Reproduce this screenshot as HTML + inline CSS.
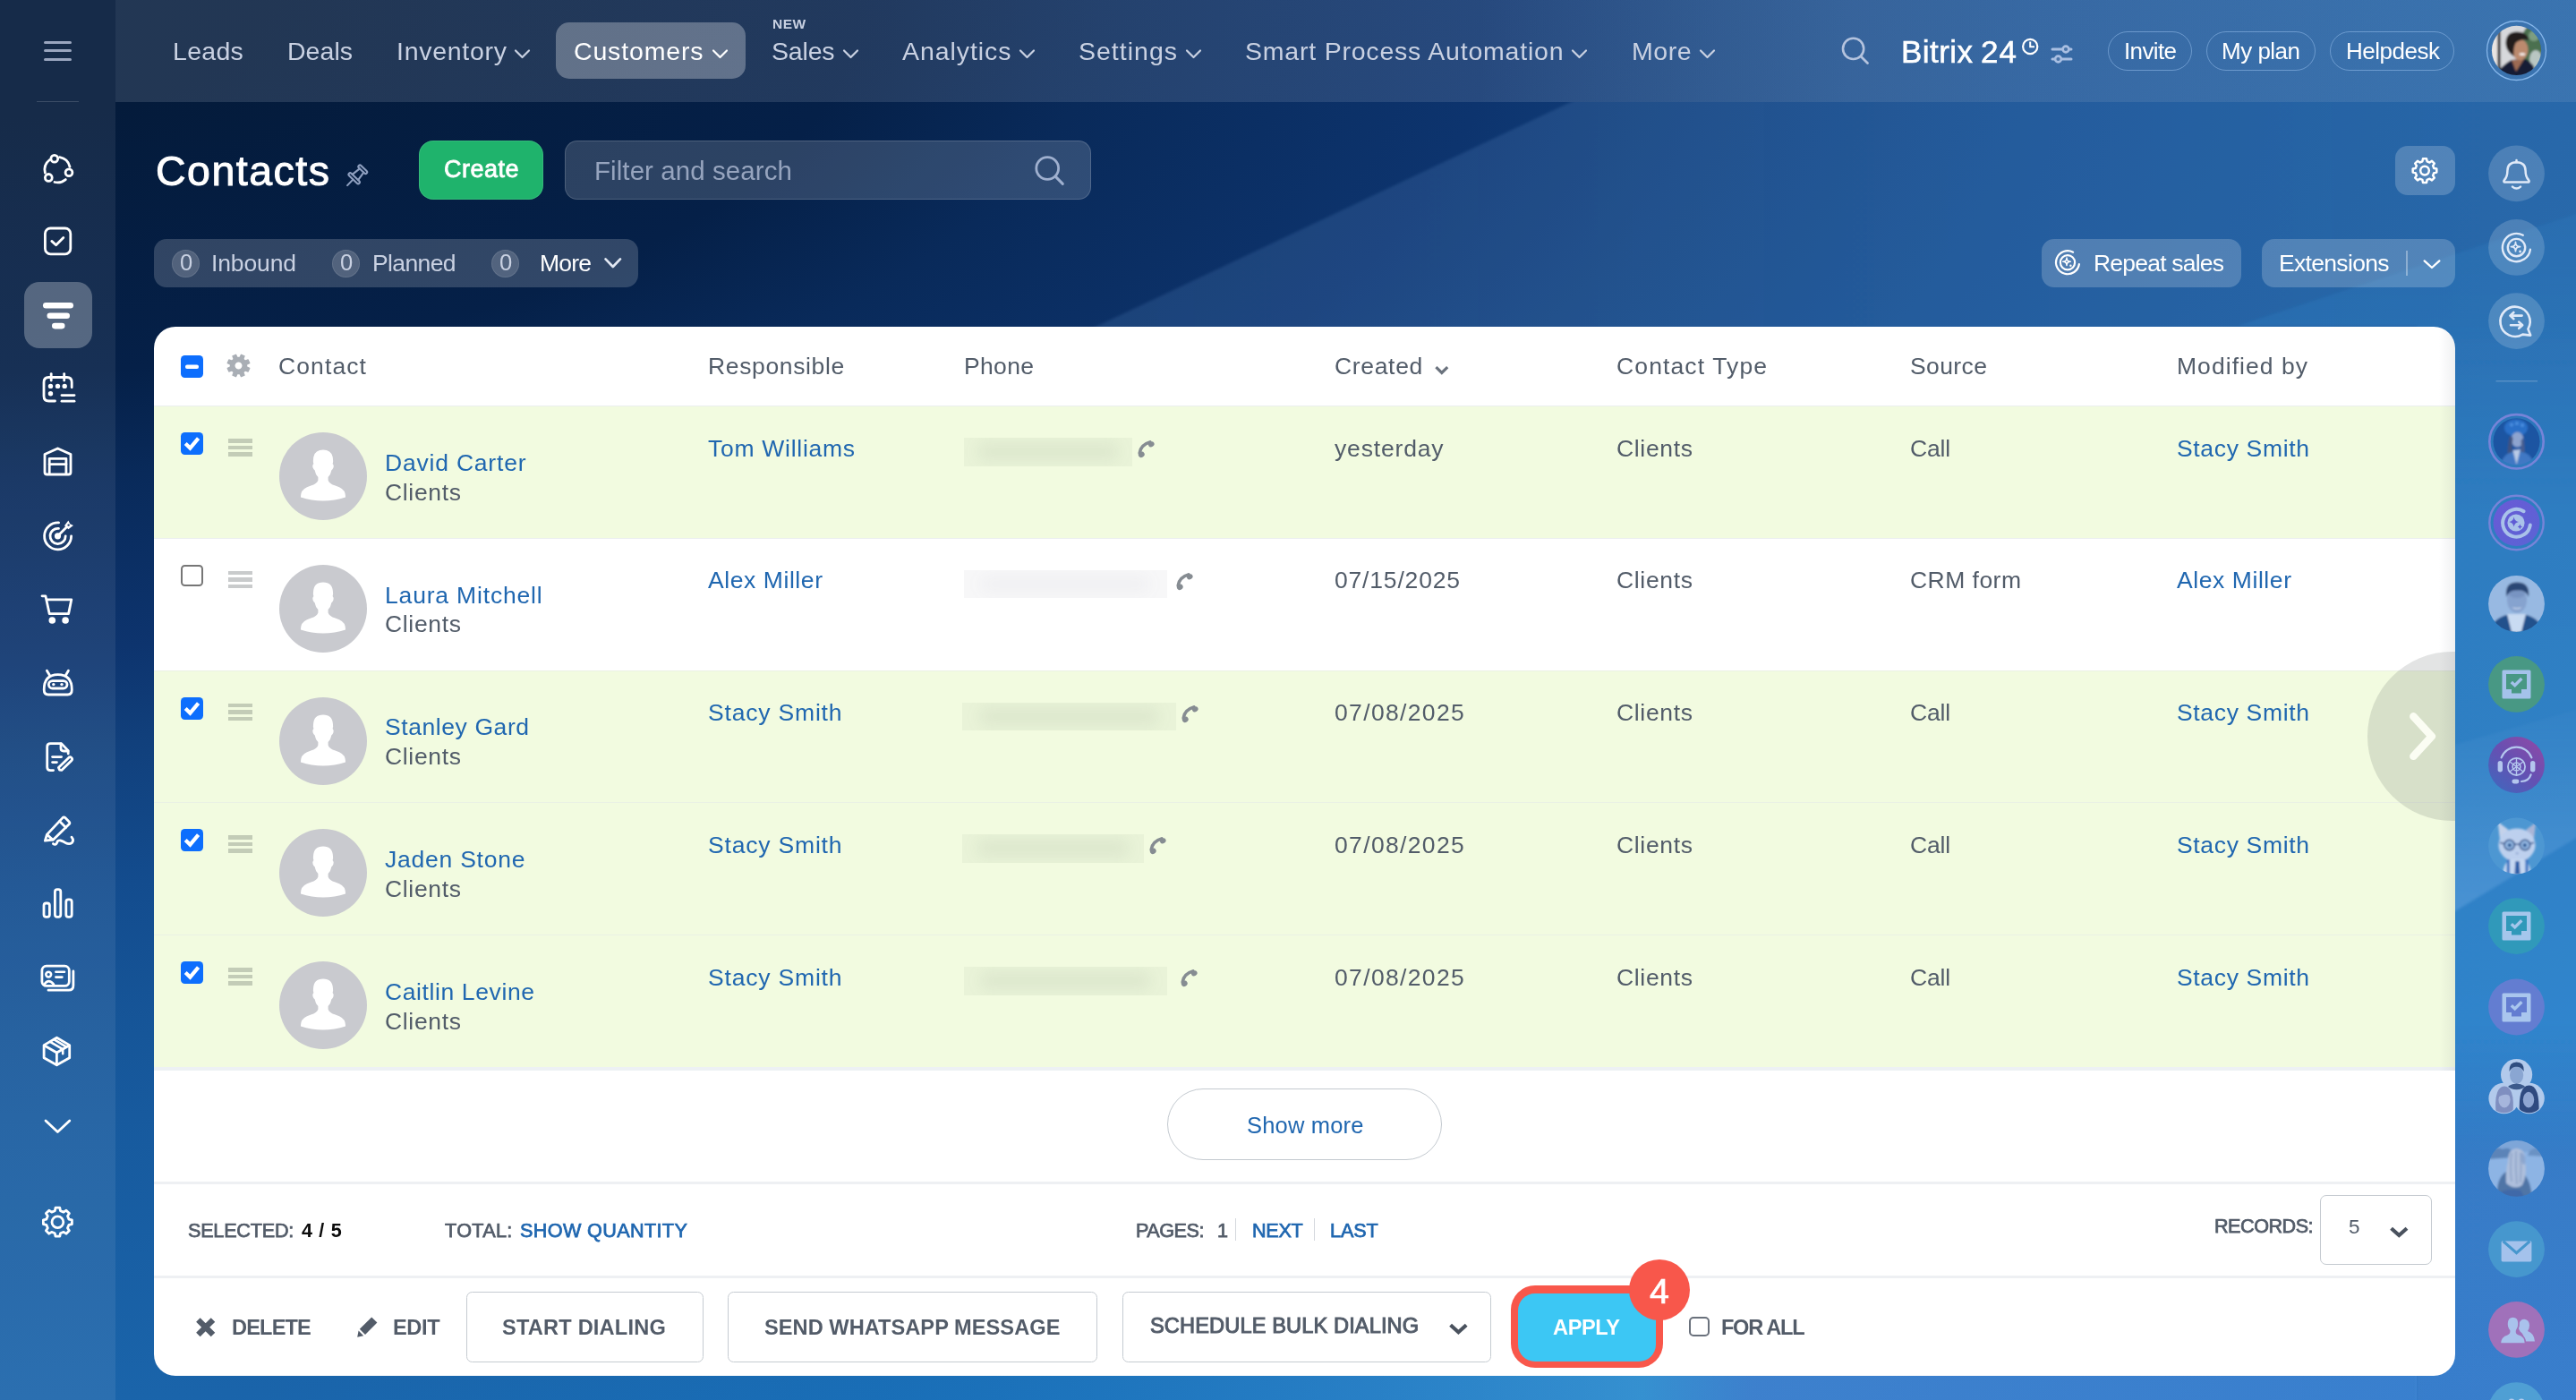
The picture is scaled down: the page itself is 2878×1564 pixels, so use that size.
<!DOCTYPE html>
<html lang="en"><head><meta charset="utf-8"><title>Contacts</title>
<style>
html,body{margin:0;padding:0}
body{width:2878px;height:1564px;overflow:hidden;position:relative;font-family:"Liberation Sans",sans-serif;
background:radial-gradient(ellipse 3000px 1300px at 0px 0px,rgb(4,27,59) 10%,rgb(5,32,72) 32%,rgb(9,42,90) 41%,rgb(13,52,110) 55.7%,rgb(17,64,124) 64%,rgb(19,76,142) 76%,rgb(22,86,153) 89%,rgb(23,90,158) 96%,rgb(26,100,170) 120%,rgb(26,106,180) 130%,rgb(30,112,190) 150%)}
.abs{position:absolute;display:block}
.t{position:absolute;display:block;white-space:pre;line-height:1;font-family:"Liberation Sans",sans-serif;will-change:transform}
svg{overflow:visible}
</style></head>
<body>
<svg class="abs" style="left:0;top:0" width="2878" height="1564" viewBox="0 0 2878 1564">
<defs>
<linearGradient id="wg1" gradientUnits="userSpaceOnUse" x1="1255" y1="0" x2="2878" y2="0"><stop offset="0" stop-color="rgb(120,170,230)" stop-opacity="0.15"/><stop offset="1" stop-color="rgb(120,170,230)" stop-opacity="0.17"/></linearGradient>
<linearGradient id="wg2" gradientUnits="userSpaceOnUse" x1="0" y1="239" x2="0" y2="1564"><stop offset="0" stop-color="rgb(60,180,255)" stop-opacity="0.07"/><stop offset="0.08" stop-color="rgb(60,180,255)" stop-opacity="0.10"/><stop offset="0.25" stop-color="rgb(60,180,255)" stop-opacity="0.24"/><stop offset="0.68" stop-color="rgb(60,180,255)" stop-opacity="0.25"/><stop offset="0.8" stop-color="rgb(60,180,255)" stop-opacity="0.05"/><stop offset="1" stop-color="rgb(60,180,255)" stop-opacity="0.05"/></linearGradient>
<linearGradient id="wg2b" gradientUnits="userSpaceOnUse" x1="0" y1="1150" x2="0" y2="1320"><stop offset="0" stop-color="rgb(120,130,230)" stop-opacity="0"/><stop offset="1" stop-color="rgb(120,130,230)" stop-opacity="0.12"/></linearGradient>
<linearGradient id="wg4" gradientUnits="userSpaceOnUse" x1="0" y1="800" x2="0" y2="1010"><stop offset="0" stop-color="rgb(170,210,255)" stop-opacity="0.03"/><stop offset="1" stop-color="rgb(170,210,255)" stop-opacity="0.20"/></linearGradient>
<linearGradient id="wg3" gradientUnits="userSpaceOnUse" x1="129" y1="0" x2="2743" y2="0">
<stop offset="0.06" stop-color="rgb(20,160,240)" stop-opacity="0"/>
<stop offset="0.327" stop-color="rgb(20,160,240)" stop-opacity="0.13"/>
<stop offset="0.53" stop-color="rgb(80,190,250)" stop-opacity="0.25"/>
<stop offset="0.653" stop-color="rgb(100,210,255)" stop-opacity="0.36"/>
<stop offset="0.70" stop-color="rgb(130,170,250)" stop-opacity="0.33"/>
<stop offset="1" stop-color="rgb(130,170,250)" stop-opacity="0.27"/></linearGradient>
</defs>
<clipPath id="cpw"><rect x="0" y="114" width="2878" height="1450"/></clipPath><filter id="fbw" x="-5%" y="-5%" width="110%" height="110%"><feGaussianBlur stdDeviation="1.6"/></filter>
<g clip-path="url(#cpw)"><polygon points="1150,400 1882,54 2960,54 2960,1650 2700,1650 2700,400" fill="url(#wg1)" filter="url(#fbw)"/>
<polygon points="2500,364 2960,212 2960,1650 2700,1650 2700,364" fill="url(#wg2)" filter="url(#fbw)"/>
<rect x="2700" y="1150" width="178" height="414" fill="url(#wg2b)"/>
<polygon points="2700,844.4 2960,769.3 2960,886.2 2700,1044" fill="url(#wg4)" filter="url(#fbw)"/></g>
<rect x="129" y="1500" width="2571" height="64" fill="url(#wg3)"/>
</svg>
<div class="abs" style="left:0;top:0;width:129px;height:1564px;background:rgba(255,255,255,0.076)"></div>
<div class="abs" style="left:1650px;top:0;width:1228px;height:114px;background:linear-gradient(90deg,rgba(122,166,220,0) 0,rgba(122,166,220,0.145) 420px,rgba(122,168,224,0.155) 100%)"></div>
<div class="abs" style="left:129px;top:0;width:2749px;height:114px;background:linear-gradient(90deg,rgba(240,244,255,0.13) 0%,rgba(215,220,235,0.135) 35%,rgba(215,220,235,0.13) 55%,rgba(228,230,240,0.11) 75%,rgba(232,236,245,0.10) 100%)"></div>
<div class="abs" style="left:49px;top:45.5px;width:31px;height:3px;border-radius:2px;background:#9aa6bf"></div>
<div class="abs" style="left:49px;top:55px;width:31px;height:3px;border-radius:2px;background:#9aa6bf"></div>
<div class="abs" style="left:49px;top:64.5px;width:31px;height:3px;border-radius:2px;background:#9aa6bf"></div>
<div class="abs" style="left:41px;top:112.5px;width:47px;height:1.5px;background:rgba(255,255,255,0.16)"></div>
<div class="abs" style="left:621px;top:25px;width:212px;height:63px;border-radius:15px;background:rgba(255,255,255,0.29)"></div>
<span class="t" style="left:193.00px;top:43.37px;font-size:28.5px;letter-spacing:0.281px;color:#c9d1e2;">Leads</span>
<span class="t" style="left:320.75px;top:43.37px;font-size:28.5px;letter-spacing:0.031px;color:#c9d1e2;">Deals</span>
<span class="t" style="left:442.50px;top:43.37px;font-size:28.5px;letter-spacing:0.719px;color:#c9d1e2;">Inventory</span>
<span class="t" style="left:641.00px;top:43.37px;font-size:28.5px;letter-spacing:0.844px;color:#ffffff;">Customers</span>
<span class="t" style="left:863.00px;top:18.88px;font-size:15.5px;letter-spacing:0.438px;color:#c9d1e2;font-weight:bold;">NEW</span>
<span class="t" style="left:862.00px;top:43.37px;font-size:28.5px;letter-spacing:-0.188px;color:#c9d1e2;">Sales</span>
<span class="t" style="left:1008.00px;top:43.37px;font-size:28.5px;letter-spacing:0.938px;color:#c9d1e2;">Analytics</span>
<span class="t" style="left:1205.00px;top:43.37px;font-size:28.5px;letter-spacing:1.000px;color:#c9d1e2;">Settings</span>
<span class="t" style="left:1390.50px;top:43.37px;font-size:28.5px;letter-spacing:0.788px;color:#c9d1e2;">Smart Process Automation</span>
<span class="t" style="left:1822.50px;top:43.37px;font-size:28.5px;letter-spacing:0.542px;color:#c9d1e2;">More</span>
<span class="t" style="left:2124.00px;top:40.37px;font-size:35px;letter-spacing:0.450px;color:#ffffff;-webkit-text-stroke:0.55px #ffffff;">Bitrix</span>
<span class="t" style="left:2212.50px;top:40.37px;font-size:35px;letter-spacing:1.125px;color:#ffffff;-webkit-text-stroke:0.55px #ffffff;">24</span>
<span class="t" style="left:2373.00px;top:43.99px;font-size:26px;letter-spacing:-0.625px;color:#ffffff;">Invite</span>
<span class="t" style="left:2482.00px;top:43.99px;font-size:26px;letter-spacing:-0.500px;color:#ffffff;">My plan</span>
<span class="t" style="left:2621.00px;top:43.99px;font-size:26px;letter-spacing:-0.500px;color:#ffffff;">Helpdesk</span>
<div class="abs" style="left:2355px;top:35px;width:93.5px;height:44px;border-radius:22px;border:1.2px solid rgba(150,190,235,0.55);box-sizing:border-box"></div>
<div class="abs" style="left:2465px;top:35px;width:122px;height:44px;border-radius:22px;border:1.2px solid rgba(150,190,235,0.55);box-sizing:border-box"></div>
<div class="abs" style="left:2603px;top:35px;width:139px;height:44px;border-radius:22px;border:1.2px solid rgba(150,190,235,0.55);box-sizing:border-box"></div>
<svg class="abs" style="left:0;top:0" width="2878" height="120" viewBox="0 0 2878 120"><path d="M576 56.5 L583.5 64 L591 56.5" fill="none" stroke="#c9d1e2" stroke-width="2.2" stroke-linecap="round" stroke-linejoin="round"/>
<path d="M943 56.5 L950.5 64 L958 56.5" fill="none" stroke="#c9d1e2" stroke-width="2.2" stroke-linecap="round" stroke-linejoin="round"/>
<path d="M1140 56.5 L1147.5 64 L1155 56.5" fill="none" stroke="#c9d1e2" stroke-width="2.2" stroke-linecap="round" stroke-linejoin="round"/>
<path d="M1326 56.5 L1333.5 64 L1341 56.5" fill="none" stroke="#c9d1e2" stroke-width="2.2" stroke-linecap="round" stroke-linejoin="round"/>
<path d="M1757 56.5 L1764.5 64 L1772 56.5" fill="none" stroke="#c9d1e2" stroke-width="2.2" stroke-linecap="round" stroke-linejoin="round"/>
<path d="M1900 56.5 L1907.5 64 L1915 56.5" fill="none" stroke="#c9d1e2" stroke-width="2.2" stroke-linecap="round" stroke-linejoin="round"/>
<path d="M797 56.5 L804.5 64 L812 56.5" fill="none" stroke="#ffffff" stroke-width="2.2" stroke-linecap="round" stroke-linejoin="round"/>
<circle cx="2070.6" cy="54.4" r="11.6" fill="none" stroke="#b4c3de" stroke-width="2.6"/><path d="M2079 63 L2086.5 70.5" stroke="#b4c3de" stroke-width="2.8" stroke-linecap="round"/>
<circle cx="2268.2" cy="52" r="8.1" fill="none" stroke="#fff" stroke-width="2.2"/><path d="M2268.2 46.5 V52.3 H2273" fill="none" stroke="#fff" stroke-width="2"/>
<g stroke="#a9bfe2" stroke-width="3" stroke-linecap="round" fill="none"><path d="M2293 55 H2314"/><path d="M2293 66 H2314"/></g><circle cx="2308" cy="55" r="3.4" fill="#4a74a8" stroke="#a9bfe2" stroke-width="2.6"/><circle cx="2299.5" cy="66" r="3.4" fill="#4a74a8" stroke="#a9bfe2" stroke-width="2.6"/>
<circle cx="2811.5" cy="56.5" r="33" fill="none" stroke="#86b6ea" stroke-width="1.3"/>
<clipPath id="cpu"><circle cx="2811.5" cy="56.4" r="27.6"/></clipPath>
<filter id="fb1" x="-10%" y="-10%" width="120%" height="120%"><feGaussianBlur stdDeviation="0.9"/></filter><g clip-path="url(#cpu)"><g filter="url(#fb1)">
<rect x="2780" y="25" width="64" height="64" fill="#d7d8dc"/>
<rect x="2780" y="25" width="11" height="64" fill="#e9e4e2"/>
<rect x="2790.5" y="25" width="3" height="64" fill="#1d1d22"/>
<ellipse cx="2829" cy="52" rx="13" ry="24" fill="#4b7050"/>
<ellipse cx="2833" cy="66" rx="7" ry="10" fill="#b9c6c2"/>
<ellipse cx="2831" cy="40" rx="6" ry="6" fill="#7d9d80"/>
<path d="M2792 90 L2792 78 Q2800 70 2806 67 L2822 66 Q2832 72 2832 80 L2832 90 Z" fill="#141a36"/>
<path d="M2806 67 L2811 80 L2820 66 Z" fill="#9c6a52"/>
<ellipse cx="2815.5" cy="55.5" rx="9" ry="11.6" fill="#bb8a6e"/>
<path d="M2799.6 50 Q2798.6 35.4 2812 35.4 Q2824 35.4 2825.4 45 Q2817 42.6 2810.6 48 Q2807.6 54 2808.6 63 Q2800.6 58 2799.6 50 Z" fill="#231c1f"/>
<ellipse cx="2818" cy="60.5" rx="3.4" ry="1.5" fill="#f4ece8"/>
</g></g></svg>
<div class="abs" style="left:27px;top:315px;width:76px;height:74px;border-radius:17px;background:rgba(255,255,255,0.27)"></div><svg class="abs" style="left:0;top:0" width="130" height="1564" viewBox="0 0 130 1564"><g fill="none" stroke="#fff" stroke-width="2.8" stroke-linecap="round" stroke-linejoin="round">
<path d="M66.7 175.7 A14.2 14.2 0 0 1 78 186.3"/>
<path d="M73.3 200.6 A14.2 14.2 0 0 1 61 203.5"/>
<path d="M50.4 193.1 A14.2 14.2 0 0 1 55.5 178.5"/>
<circle cx="60.8" cy="177.2" r="3.9"/><circle cx="77" cy="192.7" r="3.9"/><circle cx="54.3" cy="198.4" r="3.9"/></g>
<g fill="none" stroke="#fff" stroke-width="2.8" stroke-linecap="round" stroke-linejoin="round"><rect x="50.4" y="255" width="28.4" height="28.8" rx="6"/><path d="M57.8 269.4 L62.6 273.8 L70.8 265.4"/></g>
<g fill="#fff"><rect x="48" y="338" width="34" height="6.6" rx="3.3"/><rect x="52.5" y="349.4" width="25.5" height="6.6" rx="3.3"/><rect x="58" y="360.8" width="14.5" height="6.6" rx="3.3"/></g>
<g fill="none" stroke="#fff" stroke-width="2.8" stroke-linecap="round" stroke-linejoin="round"><path d="M61.5 448 H54.5 Q49 448 49 442.5 V427 Q49 421.5 54.5 421.5 H74.7 Q80.2 421.5 80.2 427 V432.8"/>
<path d="M57.2 417.6 V425"/><path d="M71.7 417.6 V425"/><path d="M69 441.6 H83"/><path d="M69 448.2 H83"/></g>
<g fill="#fff"><circle cx="56.5" cy="431.4" r="2.7"/><circle cx="64.5" cy="431.4" r="2.7"/><circle cx="72.2" cy="431.4" r="2.7"/><circle cx="56.5" cy="439.7" r="2.7"/></g>
<g fill="none" stroke="#fff" stroke-width="2.8" stroke-linecap="round" stroke-linejoin="round"><path d="M50 507.6 L64.5 501 L79 507.6 V527.5 Q79 530 76.5 530 H52.5 Q50 530 50 527.5 Z"/>
<path d="M55.2 529.5 V512.3 H73.9 V529.5"/><path d="M55.2 518.6 H73.9"/></g>
<g fill="none" stroke="#fff" stroke-width="2.8" stroke-linecap="round" stroke-linejoin="round"><path d="M65.6 583.9 A15 15 0 1 0 79.6 598.8"/><path d="M65.5 590.4 A8.6 8.6 0 1 0 73.2 598.8"/><path d="M64.5 598.8 L74.5 588.8"/></g>
<circle cx="64.5" cy="598.8" r="3.6" fill="#fff"/><path d="M72 587.2 L76.4 581.6 L78.2 585.2 L82 587 L76.4 591.2 Z" fill="#fff"/><circle cx="76.6" cy="586.6" r="1.2" fill="#1f3e6e"/>
<g fill="none" stroke="#fff" stroke-width="2.8" stroke-linecap="round" stroke-linejoin="round"><path d="M47 665.8 H50.9 L55.2 685.6 H76.6 L79.8 669.8 H52"/></g>
<circle cx="58.3" cy="693" r="3.8" fill="#fff"/><circle cx="73.1" cy="693" r="3.8" fill="#fff"/>
<g fill="none" stroke="#fff" stroke-width="2.8" stroke-linecap="round" stroke-linejoin="round"><path d="M49.2 770.5 Q49.2 753.6 64.7 753.6 Q80.3 753.6 80.3 770.5 Q80.3 776 75.5 776 H54 Q49.2 776 49.2 770.5 Z"/>
<rect x="54.4" y="760.6" width="20.6" height="8.4" rx="4.2"/><path d="M52.4 749.2 L55.4 754.2"/><path d="M76.4 749.2 L73.5 754.2"/></g>
<circle cx="59.8" cy="764.6" r="1.7" fill="#fff"/><circle cx="69" cy="764.6" r="1.7" fill="#fff"/>
<g fill="none" stroke="#fff" stroke-width="2.8" stroke-linecap="round" stroke-linejoin="round"><path d="M59.6 860.6 H56.4 Q52.7 860.6 52.7 857 V834.2 Q52.7 830.6 56.4 830.6 H68.6 L76.2 838.6 V842"/>
<path d="M68 831 V836 Q68 839 71 839 H76"/><path d="M58.6 845.6 H68.6"/><path d="M58.6 851.6 H63.4"/>
<path d="M66.6 860.2 L65.4 857.4 L76.8 846.4 Q78.6 844.9 80 846.6 Q81.4 848.2 79.8 849.8 L68.8 860.4 Z"/></g>
<g fill="none" stroke="#fff" stroke-width="2.8" stroke-linecap="round" stroke-linejoin="round"><path d="M50.4 939.2 L52.4 932.4 L70 913.6 Q71.4 912.2 72.8 913.6 L77.2 918 Q78.6 919.4 77.2 920.8 L59.6 938 Z"/>
<path d="M52.8 932.6 L58.8 938"/><path d="M66.6 917.4 L73.6 924.4"/>
<path d="M59.4 942.6 Q62 944.6 63.6 941.6 Q64 938.6 67.6 939 Q70 939.4 73 941.4 Q77.4 943.6 80.2 941.6 Q83 939 80 935.2"/></g>
<g fill="none" stroke="#fff" stroke-width="2.8" stroke-linecap="round" stroke-linejoin="round"><rect x="49" y="1009" width="6.4" height="15.4" rx="2.6"/><rect x="61.4" y="993.6" width="6.4" height="30.8" rx="2.6"/><rect x="73.8" y="1004.8" width="6.4" height="19.6" rx="2.6"/></g>
<g fill="none" stroke="#fff" stroke-width="2.8" stroke-linecap="round" stroke-linejoin="round"><rect x="46.9" y="1079.2" width="30.4" height="22.2" rx="5"/><path d="M81.9 1085 V1101 Q81.9 1106.2 76.7 1106.2 H54"/>
<circle cx="54.2" cy="1088.6" r="2.9" stroke-width="2.6"/><path d="M49.6 1099.6 Q54.2 1092.6 60 1099.6" stroke-width="2.6"/><path d="M62.4 1085.8 H72" stroke-width="2.6"/><path d="M62.4 1091.6 H69.4" stroke-width="2.6"/></g>
<g fill="none" stroke="#fff" stroke-width="2.8" stroke-linecap="round" stroke-linejoin="round"><path d="M63.4 1159.2 L77.7 1167.6 V1181.8 L63.4 1189.8 L49.1 1181.8 V1167.6 Z"/><path d="M49.6 1168 L63.4 1176 L77.2 1168"/><path d="M63.4 1176 V1189.4"/>
<path d="M56 1163.8 L70.2 1172.2 V1177.2" stroke-width="2.6"/><path d="M60.2 1161.2 L74.2 1169.6" stroke-width="2.6"/></g>
<g fill="none" stroke="#fff" stroke-width="2.8" stroke-linecap="round" stroke-linejoin="round"><path d="M51 1252 L64.4 1264.6 L77.8 1252"/></g>
<g fill="none" stroke="#fff" stroke-width="2.8" stroke-linecap="round" stroke-linejoin="round"><path d="M62.0 1349.2 L66.8 1349.2 L67.5 1352.6 L71.1 1354.1 L74.0 1352.2 L77.4 1355.6 L75.5 1358.5 L77.0 1362.1 L80.4 1362.8 L80.4 1367.6 L77.0 1368.3 L75.5 1371.9 L77.4 1374.8 L74.0 1378.2 L71.1 1376.3 L67.5 1377.8 L66.8 1381.2 L62.0 1381.2 L61.3 1377.8 L57.7 1376.3 L54.8 1378.2 L51.4 1374.8 L53.3 1371.9 L51.8 1368.3 L48.4 1367.6 L48.4 1362.8 L51.8 1362.1 L53.3 1358.5 L51.4 1355.6 L54.8 1352.2 L57.7 1354.1 L61.3 1352.6 Z" stroke-linejoin="round"/><circle cx="64.4" cy="1365.2" r="6.4"/></g></svg>
<span class="t" style="left:174.00px;top:168.14px;font-size:46.5px;letter-spacing:1.500px;color:#ffffff;-webkit-text-stroke:1.0px #ffffff;">Contacts</span>
<div class="abs" style="left:468px;top:157px;width:139px;height:65.5px;border-radius:16px;background:#1fb36c;box-shadow:inset 0 0 0 1px rgba(255,255,255,0.10)"></div>
<span class="t" style="left:496.00px;top:176.14px;font-size:27px;letter-spacing:0.500px;color:#ffffff;-webkit-text-stroke:0.8px #ffffff;">Create</span>
<div class="abs" style="left:631px;top:157px;width:588px;height:65.5px;border-radius:14px;background:rgba(255,255,255,0.155);border:1.2px solid rgba(255,255,255,0.16);box-sizing:border-box"></div>
<span class="t" style="left:664.00px;top:175.78px;font-size:29.5px;letter-spacing:0.078px;color:#96a4be;">Filter and search</span>
<div class="abs" style="left:172px;top:267px;width:541px;height:54px;border-radius:14px;background:rgba(255,255,255,0.175)"></div>
<div class="abs" style="left:192.0px;top:278.5px;width:31px;height:31px;border-radius:50%;background:rgba(255,255,255,0.16);box-shadow:inset 0 0 0 1px rgba(255,255,255,0.10)"></div>
<span class="t" style="left:201.40px;top:281.33px;font-size:25.6px;letter-spacing:0.000px;color:#c9d1e2;">0</span>
<div class="abs" style="left:371.0px;top:278.5px;width:31px;height:31px;border-radius:50%;background:rgba(255,255,255,0.16);box-shadow:inset 0 0 0 1px rgba(255,255,255,0.10)"></div>
<span class="t" style="left:380.40px;top:281.33px;font-size:25.6px;letter-spacing:0.000px;color:#c9d1e2;">0</span>
<div class="abs" style="left:549.0px;top:278.5px;width:31px;height:31px;border-radius:50%;background:rgba(255,255,255,0.16);box-shadow:inset 0 0 0 1px rgba(255,255,255,0.10)"></div>
<span class="t" style="left:558.40px;top:281.33px;font-size:25.6px;letter-spacing:0.000px;color:#c9d1e2;">0</span>
<span class="t" style="left:236.00px;top:280.57px;font-size:26.5px;letter-spacing:-0.125px;color:#c9d1e2;">Inbound</span>
<span class="t" style="left:415.50px;top:280.57px;font-size:26.5px;letter-spacing:-0.625px;color:#c9d1e2;">Planned</span>
<span class="t" style="left:603.00px;top:280.57px;font-size:26.5px;letter-spacing:-0.792px;color:#ffffff;">More</span>
<div class="abs" style="left:2281px;top:267px;width:223px;height:54px;border-radius:14px;background:rgba(255,255,255,0.2)"></div>
<div class="abs" style="left:2527px;top:267px;width:216px;height:54px;border-radius:14px;background:rgba(255,255,255,0.2)"></div>
<div class="abs" style="left:2676px;top:163px;width:67px;height:55px;border-radius:14px;background:rgba(255,255,255,0.2)"></div>
<span class="t" style="left:2339.00px;top:280.57px;font-size:26.5px;letter-spacing:-0.784px;color:#ffffff;">Repeat sales</span>
<span class="t" style="left:2546.00px;top:281.07px;font-size:26.5px;letter-spacing:-0.681px;color:#ffffff;">Extensions</span>
<div class="abs" style="left:2688.4px;top:280px;width:1.6px;height:28px;background:rgba(255,255,255,0.35)"></div>
<svg class="abs" style="left:0;top:120px" width="2878" height="240" viewBox="0 120 2878 240"><g transform="translate(387.8 207.4) rotate(-46)" fill="none" stroke="#8e9fbf" stroke-width="2.1" stroke-linejoin="round" stroke-linecap="round">
<path d="M0.4 0 H9.4"/><rect x="9.6" y="-7.9" width="3.5" height="15.8" rx="1.75"/>
<path d="M13.1 -4.5 L23.4 -3.1 M13.1 4.5 L23.4 3.1"/><rect x="23.4" y="-6.1" width="3.5" height="12.2" rx="1.75"/></g>
<circle cx="1170.2" cy="188" r="12.4" fill="none" stroke="#9fb0cf" stroke-width="2.8"/><path d="M1179.4 197.4 L1187.3 205.4" stroke="#9fb0cf" stroke-width="3" stroke-linecap="round"/>
<path d="M676.5 289.4 L684.8 298 L693 289.4" fill="none" stroke="#e2e8f3" stroke-width="2.7" stroke-linecap="round" stroke-linejoin="round"/>
<path d="M2708.6 291.4 L2717 299 L2725.4 291.4" fill="none" stroke="#fff" stroke-width="2.3" stroke-linecap="round" stroke-linejoin="round"/>
<path d="M2707.0 177.3 L2711.0 177.3 L2711.6 180.3 L2714.5 181.5 L2717.0 179.8 L2719.8 182.6 L2718.1 185.1 L2719.3 188.0 L2722.3 188.6 L2722.3 192.6 L2719.3 193.2 L2718.1 196.1 L2719.8 198.6 L2717.0 201.4 L2714.5 199.7 L2711.6 200.9 L2711.0 203.9 L2707.0 203.9 L2706.4 200.9 L2703.5 199.7 L2701.0 201.4 L2698.2 198.6 L2699.9 196.1 L2698.7 193.2 L2695.7 192.6 L2695.7 188.6 L2698.7 188.0 L2699.9 185.1 L2698.2 182.6 L2701.0 179.8 L2703.5 181.5 L2706.4 180.3 Z" fill="none" stroke="#fff" stroke-width="2.5" stroke-linejoin="round"/><circle cx="2709" cy="190.6" r="4.8" fill="none" stroke="#fff" stroke-width="2.5"/>
<path d="M2316.1 281.7 A13 13 0 1 0 2322.9 295.0" fill="none" stroke="#ffffff" stroke-width="2.2" stroke-linecap="round"/><circle cx="2310" cy="293.2" r="8.1" fill="none" stroke="#ffffff" stroke-width="2.2"/><path d="M2309 287.90999999999997 Q2309 292.2 2313.29 292.2 Q2309 292.2 2309 296.49 Q2309 292.2 2304.71 292.2 Q2309 292.2 2309 287.90999999999997Z" fill="none" stroke="#ffffff" stroke-width="1.5" stroke-linejoin="round"/><circle cx="2313.4" cy="296.8" r="1.2" fill="#ffffff"/></svg>
<svg class="abs" style="left:2760px;top:150px" width="118" height="1414" viewBox="2760 150 118 1414"><filter id="fb2" x="-10%" y="-10%" width="120%" height="120%"><feGaussianBlur stdDeviation="0.8"/></filter>
<circle cx="2811.5" cy="193.8" r="31.4" fill="#fff" fill-opacity="0.17"/>
<circle cx="2811.5" cy="276.4" r="31.4" fill="#fff" fill-opacity="0.17"/>
<circle cx="2811.5" cy="358.6" r="31.4" fill="#fff" fill-opacity="0.17"/>
<g fill="none" stroke="#dfe9f8" stroke-width="2.5" stroke-linecap="round" stroke-linejoin="round">
<path d="M2798.2 203.6 H2824.8 Q2826.4 202.8 2825 201 Q2821.6 197.6 2821.6 190.8 Q2821.6 181.4 2811.5 181.2 Q2801.4 181.4 2801.4 190.8 Q2801.4 197.6 2798 201 Q2796.6 202.8 2798.2 203.6 Z"/>
<path d="M2807 208.6 Q2811.5 212.4 2816 208.6"/><path d="M2811.5 179 V180.6"/></g>
<path d="M2818.8 262.8 A15.6 15.6 0 1 0 2826.9 278.8" fill="none" stroke="#dfe9f8" stroke-width="2.4" stroke-linecap="round"/><circle cx="2811.5" cy="276.6" r="9.7" fill="none" stroke="#dfe9f8" stroke-width="2.4"/><path d="M2810.5 270.452 Q2810.5 275.6 2815.648 275.6 Q2810.5 275.6 2810.5 280.74800000000005 Q2810.5 275.6 2805.352 275.6 Q2810.5 275.6 2810.5 270.452Z" fill="none" stroke="#dfe9f8" stroke-width="1.7" stroke-linejoin="round"/><circle cx="2815.6" cy="281.0" r="1.4" fill="#dfe9f8"/>
<g fill="none" stroke="#dfe9f8" stroke-width="2.6" stroke-linecap="round" stroke-linejoin="round">
<path d="M2818.4 373.6 A16.6 16.6 0 1 1 2824.4 367.6 L2827.2 374.6 Z"/>
<path d="M2817.6 352.6 H2804.6 M2808.4 349 L2804.4 352.6 L2808.4 356.2"/><path d="M2805 363.2 H2818 M2814.2 359.6 L2818.2 363.2 L2814.2 366.8"/></g>
<rect x="2788.5" y="425" width="46.5" height="1.5" fill="#fff" fill-opacity="0.2"/>
<circle cx="2811.5" cy="493.3" r="30.2" fill="none" stroke="#7784d8" stroke-width="2.6"/>
<clipPath id="cp1"><circle cx="2811.5" cy="493.3" r="26"/></clipPath><g clip-path="url(#cp1)" filter="url(#fb2)">
<rect x="2784" y="466" width="56" height="56" fill="#1c55a2"/>
<ellipse cx="2811" cy="478" rx="13" ry="9.4" fill="#2a6fc8"/><circle cx="2806" cy="474.6" r="2" fill="#4b8fe0"/><circle cx="2812" cy="473" r="2" fill="#4b8fe0"/><circle cx="2818" cy="475" r="2" fill="#4b8fe0"/>
<ellipse cx="2812.5" cy="491" rx="6.8" ry="8.6" fill="#8ea4cf"/>
<path d="M2804 487 Q2801 500 2802 512 L2807 512 Q2806 498 2807.5 489 Z" fill="#41527f"/>
<path d="M2819 489 Q2821.5 500 2819.5 511 L2815.6 511 Q2817.5 500 2816.6 492 Z" fill="#4a5f8f"/>
<path d="M2793 522 Q2796 507 2807 505 L2818 505 Q2829 507 2832 522 Z" fill="#3f78c4"/>
<path d="M2807.4 503 L2811.6 519 L2816 502 Z" fill="#b9cbe6"/></g>
<circle cx="2811.5" cy="584" r="30.2" fill="none" stroke="#7784d8" stroke-width="2.4"/>
<linearGradient id="gp2" x1="0" y1="0" x2="1" y2="1"><stop offset="0" stop-color="#6a5ad6"/><stop offset="1" stop-color="#5a64d4"/></linearGradient>
<circle cx="2811.5" cy="584" r="26" fill="url(#gp2)"/>
<path d="M2819.6 571.2 A15.4 15.4 0 1 0 2826.8 586.4" fill="none" stroke="#a9c2ea" stroke-width="4" stroke-linecap="round"/><circle cx="2811.0" cy="584" r="9.6" fill="#a9c2ea"/><path d="M2808.6 577.4 Q2809.4 582.2 2814 583 Q2809.4 583.8 2808.6 588.6 Q2807.8 583.8 2803.2 583 Q2807.8 582.2 2808.6 577.4Z" fill="#5f5cd4"/><path d="M2815.4 585.6 Q2815.8 588 2818 588.4 Q2815.8 588.8 2815.4 591.2 Q2815 588.8 2812.8 588.4 Q2815 588 2815.4 585.6Z" fill="#5f5cd4"/>
<clipPath id="cp3"><circle cx="2811.5" cy="674.5" r="31.4"/></clipPath><g clip-path="url(#cp3)" filter="url(#fb2)">
<rect x="2778" y="641" width="68" height="68" fill="#98b9e2"/>
<path d="M2780 710 Q2783 692 2800 687 L2823 687 Q2840 692 2843 710 Z" fill="#23518c"/>
<path d="M2801 686 L2806 706 L2817 706 L2822 686 Z" fill="#c9dbf2"/>
<ellipse cx="2812" cy="670.5" rx="11" ry="14" fill="#86a3cf"/><ellipse cx="2812" cy="664" rx="9" ry="4" fill="#7894c2"/>
<path d="M2800.2 667 Q2798 650.6 2812 650.6 Q2827 650.6 2825 667 Q2822 658.6 2812 659.6 Q2803 659.6 2800.2 667Z" fill="#2c4675"/>
<path d="M2806 678.6 Q2812 682.6 2818 678.6 Q2812 680.2 2806 678.6Z" fill="#dfe9f8"/></g>
<circle cx="2811.5" cy="764.4" r="31.4" fill="#489884"/><path d="M2797.0 748.4 H2826.0 Q2827.5 748.4 2827.5 749.9 V778.9 Q2827.5 780.4 2826.0 780.4 H2797.0 Q2795.5 780.4 2795.5 778.9 V749.9 Q2795.5 748.4 2797.0 748.4 Z M2800.0 752.9 V769.9 H2806.0 V774.4 H2817.0 V769.9 H2823.0 V752.9 Z" fill="#a4c2ea" fill-rule="evenodd"/><path d="M2805.8 762.0 L2809.7 765.6999999999999 L2817.3 758.0" fill="none" stroke="#a4c2ea" stroke-width="3.4"/>
<linearGradient id="gp5" x1="0.9" y1="0.1" x2="0.2" y2="0.95"><stop offset="0" stop-color="#8a4aa8"/><stop offset="0.5" stop-color="#6650b2"/><stop offset="1" stop-color="#4564bc"/></linearGradient>
<circle cx="2811.5" cy="854.5" r="31.4" fill="url(#gp5)"/>
<g fill="none" stroke="#b4c6ee" stroke-width="2.2" stroke-linecap="round">
<path d="M2794.6 846.4 A18 18 0 0 1 2828.4 846.4"/><path d="M2827.6 865.4 Q2825.4 872.6 2817 873"/>
<circle cx="2811.5" cy="856.4" r="9.6" stroke-width="1.8"/><circle cx="2811.5" cy="856.4" r="4.4" stroke-width="1.6"/>
<path d="M2804 851 L2819 862 M2819 851 L2804 862 M2811.5 847 V866" stroke-width="1.4"/></g>
<rect x="2790.6" y="850" width="5.4" height="12.4" rx="2.7" fill="#b4c6ee"/><rect x="2827" y="850" width="5.4" height="12.4" rx="2.7" fill="#b4c6ee"/><rect x="2806.4" y="870.6" width="8" height="4.8" rx="2.4" fill="#b4c6ee"/>
<clipPath id="cp6"><circle cx="2811.5" cy="945" r="31.4"/></clipPath>
<circle cx="2811.5" cy="945" r="31.4" fill="#4d97d2"/><g clip-path="url(#cp6)" filter="url(#fb2)">
<path d="M2790.6 918 L2802.6 927 L2793 938 Z" fill="#c4d2ea"/><path d="M2833 919 L2822 927 L2831 938 Z" fill="#a9b5d6"/>
<ellipse cx="2812" cy="944" rx="20.6" ry="18.6" fill="#bdd0ee"/>
<path d="M2796 978 Q2797 962 2806 960 L2818 960 Q2827 962 2828 978 Z" fill="#c6d8f2"/>
<rect x="2800.6" y="960" width="3.4" height="17" fill="#3f78c4"/><rect x="2821.4" y="960" width="3.4" height="17" fill="#3f78c4"/><path d="M2810.4 962 H2814.6 L2815.6 977 H2809.4 Z" fill="#2f5fa8"/>
<circle cx="2803.6" cy="944" r="5.6" fill="#9cc0ea" stroke="#2a4f88" stroke-width="1.7"/><circle cx="2821" cy="944" r="5.6" fill="#9cc0ea" stroke="#2a4f88" stroke-width="1.7"/><path d="M2809.2 943.2 H2815.4 M2798 942.6 L2793 941.2 M2826.6 942.6 L2831 941.2" stroke="#2a4f88" stroke-width="1.5"/>
<circle cx="2803.8" cy="944.2" r="2.2" fill="#2a5a94"/><circle cx="2820.8" cy="944.2" r="2.2" fill="#2a5a94"/>
<path d="M2810 952.6 L2814.4 952.6 L2812.2 955 Z" fill="#8fa4cf"/></g>
<circle cx="2811.5" cy="1034.6" r="31.4" fill="#3099ba"/><path d="M2797.0 1018.5999999999999 H2826.0 Q2827.5 1018.5999999999999 2827.5 1020.0999999999999 V1049.1 Q2827.5 1050.6 2826.0 1050.6 H2797.0 Q2795.5 1050.6 2795.5 1049.1 V1020.0999999999999 Q2795.5 1018.5999999999999 2797.0 1018.5999999999999 Z M2800.0 1023.0999999999999 V1040.1 H2806.0 V1044.6 H2817.0 V1040.1 H2823.0 V1023.0999999999999 Z" fill="#a4c6ec" fill-rule="evenodd"/><path d="M2805.8 1032.1999999999998 L2809.7 1035.8999999999999 L2817.3 1028.1999999999998" fill="none" stroke="#a4c6ec" stroke-width="3.4"/>
<circle cx="2811.5" cy="1125" r="31.4" fill="#637dd1"/><path d="M2797.0 1109.6 H2826.0 Q2827.5 1109.6 2827.5 1111.1 V1140.1 Q2827.5 1141.6 2826.0 1141.6 H2797.0 Q2795.5 1141.6 2795.5 1140.1 V1111.1 Q2795.5 1109.6 2797.0 1109.6 Z M2800.0 1114.1 V1131.1 H2806.0 V1135.6 H2817.0 V1131.1 H2823.0 V1114.1 Z" fill="#a9c6ee" fill-rule="evenodd"/><path d="M2805.8 1123.1999999999998 L2809.7 1126.8999999999999 L2817.3 1119.1999999999998" fill="none" stroke="#a9c6ee" stroke-width="3.4"/>
<circle cx="2811.6" cy="1200.6" r="17.6" fill="#b2caec"/><circle cx="2797.6" cy="1227" r="17.2" fill="#b2caec"/><circle cx="2825.6" cy="1227" r="17.2" fill="#b2caec"/>
<clipPath id="cp9a"><circle cx="2811.6" cy="1200.6" r="16.6"/></clipPath><clipPath id="cp9b"><circle cx="2797.6" cy="1227" r="16.2"/></clipPath><clipPath id="cp9c"><circle cx="2825.6" cy="1227" r="16.2"/></clipPath>
<g clip-path="url(#cp9a)"><ellipse cx="2811.6" cy="1201" rx="7.6" ry="10" fill="#8aa6d2"/><path d="M2803.4 1197 Q2803 1186.6 2811.6 1186.6 Q2820.4 1186.6 2819.8 1197 Q2816 1191.4 2811.6 1191.8 Q2807 1191.4 2803.4 1197Z" fill="#2f4d80"/><path d="M2799 1220 Q2800 1211 2811.6 1210.4 Q2823 1211 2824 1220Z" fill="#3c5a8c"/></g>
<g clip-path="url(#cp9b)"><path d="M2788.6 1244 Q2786 1214 2798 1213.4 Q2810 1214 2807.4 1244Z" fill="#7f8fc0"/><ellipse cx="2798" cy="1228.6" rx="6.6" ry="8.8" fill="#a6b6dc"/><path d="M2790.6 1226 Q2791 1216 2798 1216.6 Q2805.4 1216 2805.4 1226 Q2801 1219.6 2790.6 1226Z" fill="#7f8fc0"/></g>
<g clip-path="url(#cp9c)"><path d="M2815 1244 Q2813 1213 2825.6 1212.6 Q2838 1213 2836.4 1244Z" fill="#2f4a80"/><ellipse cx="2825" cy="1228.6" rx="6.2" ry="8.8" fill="#8fa6d2"/></g>
<clipPath id="cp10"><circle cx="2811.5" cy="1305.4" r="31.4"/></clipPath><g clip-path="url(#cp10)" filter="url(#fb2)">
<rect x="2778" y="1272" width="68" height="68" fill="#8db4e4"/><rect x="2778" y="1272" width="68" height="15" fill="#7ea6d8"/>
<path d="M2778 1291 Q2786 1279 2796 1284 Q2803 1280 2808 1288 L2808 1293 L2778 1295 Z" fill="#5b84b8"/><path d="M2826 1286 Q2834 1279 2846 1284 L2846 1292 L2824 1291 Z" fill="#6a92c4"/>
<path d="M2790 1340 Q2788 1314 2802 1308 L2818 1310 Q2828 1318 2829 1340 Z" fill="#4f74a6"/>
<path d="M2802 1297 Q2802 1283 2812 1283 Q2822 1284 2821 1297 Q2824 1312 2818 1324 Q2810 1330 2800 1322 Q2799 1310 2802 1297Z" fill="#aebfdc"/>
<path d="M2806 1288 Q2804 1304 2806 1320 M2811 1286 Q2810 1304 2812 1323 M2816 1288 Q2817 1304 2816 1321" stroke="#8fa4c8" stroke-width="1.6" fill="none"/>
<path d="M2816 1287 Q2823 1290 2821 1300 Q2819 1303 2817 1297 Z" fill="#8ca6cf"/>
<path d="M2788 1336 Q2800 1326 2816 1330 L2822 1340 L2788 1340 Z" fill="#3f69a8"/></g>
<circle cx="2811.5" cy="1395.6" r="31.4" fill="#4697ce"/>
<path d="M2796 1386.6 H2827 Q2828.4 1386.6 2828.4 1388 V1408 Q2828.4 1409.4 2827 1409.4 H2796 Q2794.6 1409.4 2794.6 1408 V1388 Q2794.6 1386.6 2796 1386.6Z" fill="#a4c2ec"/>
<path d="M2796.6 1386.6 L2811.5 1399.6 L2826.4 1386.6" fill="none" stroke="#4697ce" stroke-width="3.2"/>
<circle cx="2811.5" cy="1485.4" r="31.4" fill="#a071ba"/>
<g fill="#a9c2ec"><path d="M2820.4 1498.6 Q2820 1490 2815.6 1487.4 Q2813 1484 2814 1479.6 Q2815.6 1473.6 2820.6 1473.8 Q2825.6 1474.4 2826 1480.6 Q2826 1484.6 2824 1487 Q2831.4 1489.6 2832 1498.6Z"/>
<path d="M2793.4 1501 Q2793.4 1492.6 2801.4 1490.6 Q2804 1489.4 2803.6 1486.6 Q2800.6 1483 2801 1478 Q2801.6 1471 2807.6 1471 Q2813.6 1471 2814 1478 Q2814.4 1483 2811.6 1486.6 Q2811 1489.4 2813.6 1490.6 Q2821.4 1492.6 2821.6 1501Z" stroke="#a071ba" stroke-width="1.6"/></g>
<circle cx="2811.5" cy="1575.6" r="31.4" fill="#4f9fd4"/><circle cx="2806" cy="1566" r="3.4" fill="#b4ccee"/><circle cx="2817" cy="1566" r="3.4" fill="#b4ccee"/></svg>
<div class="abs" style="left:172px;top:364.5px;width:2571px;height:1172px;border-radius:24px;background:#fff;overflow:hidden">
<svg class="abs" style="left:30px;top:32.5px" width="25" height="25" viewBox="0 0 25 25"><rect width="25" height="25" rx="4.5" fill="#0d6efd"/><rect x="5" y="10.4" width="15" height="4.6" rx="2" fill="#fff"/></svg>
<svg class="abs" style="left:0;top:0" width="140" height="90" viewBox="0 0 140 90"><path d="M97.4 31.2 L101.1 32.8 L99.9 36.1 L101.9 38.1 L105.2 36.9 L106.8 40.6 L103.6 42.1 L103.6 44.9 L106.8 46.4 L105.2 50.1 L101.9 48.9 L99.9 50.9 L101.1 54.2 L97.4 55.8 L95.9 52.6 L93.1 52.6 L91.6 55.8 L87.9 54.2 L89.1 50.9 L87.1 48.9 L83.8 50.1 L82.2 46.4 L85.4 44.9 L85.4 42.1 L82.2 40.6 L83.8 36.9 L87.1 38.1 L89.1 36.1 L87.9 32.8 L91.6 31.2 L93.1 34.4 L95.9 34.4 Z M99.1 43.5 A4.6 4.6 0 1 0 89.9 43.5 A4.6 4.6 0 1 0 99.1 43.5 Z" fill="#a9aeb5" fill-rule="evenodd" stroke="#a9aeb5" stroke-width="1.2" stroke-linejoin="round"/></svg>
<span class="t" style="left:139.00px;top:31.82px;font-size:26.5px;letter-spacing:1.104px;color:#525c69;">Contact</span>
<span class="t" style="left:618.75px;top:31.82px;font-size:26.5px;letter-spacing:0.637px;color:#525c69;">Responsible</span>
<span class="t" style="left:905.00px;top:31.82px;font-size:26.5px;letter-spacing:0.344px;color:#525c69;">Phone</span>
<span class="t" style="left:1318.75px;top:31.82px;font-size:26.5px;letter-spacing:0.667px;color:#525c69;">Created</span>
<span class="t" style="left:1634.00px;top:31.82px;font-size:26.5px;letter-spacing:1.125px;color:#525c69;">Contact Type</span>
<span class="t" style="left:1962.00px;top:31.82px;font-size:26.5px;letter-spacing:0.400px;color:#525c69;">Source</span>
<span class="t" style="left:2260.00px;top:31.82px;font-size:26.5px;letter-spacing:1.050px;color:#525c69;">Modified by</span>
<svg class="abs" style="left:1428px;top:39.5px" width="24" height="20" viewBox="1600 404 24 20"><path d="M1604.4 410.2 L1610.8 416.4 L1617.2 410.2" fill="none" stroke="#6a727d" stroke-width="3.2" stroke-linejoin="miter"/></svg>
<div class="abs" style="left:0;top:88.5px;width:2571px;height:148.5px;background:#f2fbe0;border-top:1.5px solid #ebeff0;box-sizing:border-box"></div>
<div class="abs" style="left:0;top:236.25px;width:2571px;height:148.5px;background:#ffffff;border-top:1.5px solid #ebeff0;box-sizing:border-box"></div>
<div class="abs" style="left:0;top:384.0px;width:2571px;height:148.5px;background:#f2fbe0;border-top:1.5px solid #eaf1e4;box-sizing:border-box"></div>
<div class="abs" style="left:0;top:531.75px;width:2571px;height:148.5px;background:#f2fbe0;border-top:1.5px solid #eaf1e4;box-sizing:border-box"></div>
<div class="abs" style="left:0;top:679.5px;width:2571px;height:148.5px;background:#f2fbe0;border-top:1.5px solid #eaf1e4;box-sizing:border-box"></div>
<div class="abs" style="left:0;top:827.25px;width:2571px;height:4.5px;background:#edf1f4"></div>
<div class="abs" style="left:2473px;top:363.5px;width:189px;height:189px;border-radius:50%;background:rgba(56,62,66,0.14)"></div>
<svg class="abs" style="left:2508px;top:420.5px" width="60" height="76" viewBox="2680 785 60 76"><path d="M2696.4 800.4 L2716.8 822.6 L2696.4 844.8" fill="none" stroke="#fbfdf3" stroke-width="8.6" stroke-linecap="round" stroke-linejoin="round"/></svg>
<svg class="abs" style="left:30px;top:118.5px" width="25" height="25" viewBox="0 0 25 25"><rect width="25" height="25" rx="4.5" fill="#0d6efd"/><path d="M5.2 12.6 L10.4 17.6 L19.6 6.6" fill="none" stroke="#fff" stroke-width="4.2" stroke-linejoin="miter"/></svg>
<div class="abs" style="left:83px;top:125.5px;width:27px;height:4.6px;background:rgba(110,122,110,0.36)"></div>
<div class="abs" style="left:83px;top:133.0px;width:27px;height:4.6px;background:rgba(110,122,110,0.36)"></div>
<div class="abs" style="left:83px;top:140.5px;width:27px;height:4.6px;background:rgba(110,122,110,0.36)"></div>
<svg class="abs" style="left:140px;top:118.5px" width="98" height="98" viewBox="0 0 98 98"><circle cx="49" cy="49" r="49" fill="#c9cacf"/>
<path d="M49 19.4 Q59.6 19.4 60 30.6 Q60.4 33.4 59.6 35 Q61.4 36.6 60.4 39.6 Q59.6 42 58.4 42.2 Q57.6 47 54.6 50 L54.6 53.6 Q56 57.6 62.6 59.6 Q72.6 62.6 73.6 68.6 Q74 71 74 72.4 Q62 76.4 49 76.4 Q36 76.4 24 72.4 Q24 71 24.4 68.6 Q25.4 62.6 35.4 59.6 Q42 57.6 43.4 53.6 L43.4 50 Q40.4 47 39.6 42.2 Q38.4 42 37.6 39.6 Q36.6 36.6 38.4 35 Q37.6 33.4 38 30.6 Q38.4 19.4 49 19.4 Z" fill="#fff"/></svg>
<span class="t" style="left:258.00px;top:139.32px;font-size:26.5px;letter-spacing:0.795px;color:#2067b0;">David Carter</span>
<span class="t" style="left:258.00px;top:172.07px;font-size:26.5px;letter-spacing:0.667px;color:#525c69;">Clients</span>
<span class="t" style="left:619.00px;top:123.07px;font-size:26.5px;letter-spacing:0.727px;color:#2067b0;">Tom Williams</span>
<div class="abs" style="left:905px;top:124.5px;width:188px;height:31.5px;background:rgba(120,140,110,0.065);overflow:hidden"><div class="abs" style="left:15px;top:5px;width:158px;height:21px;border-radius:10px;background:rgba(110,130,100,0.085);filter:blur(8px)"></div></div>
<svg class="abs" style="left:1096px;top:124.5px" width="24" height="26" viewBox="0 0 24 26"><path d="M5.3 17.2 Q6.4 7.8 16.8 5" fill="none" stroke="#868c92" stroke-width="3.8" stroke-linecap="round"/><ellipse cx="7.3" cy="18.9" rx="3.5" ry="3.0" transform="rotate(-32 7.3 18.9)" fill="#868c92"/><ellipse cx="18.3" cy="7.4" rx="3.4" ry="2.9" transform="rotate(-32 18.3 7.4)" fill="#868c92"/></svg>
<span class="t" style="left:1319.00px;top:123.07px;font-size:26.5px;letter-spacing:0.828px;color:#525c69;">yesterday</span>
<span class="t" style="left:1634.00px;top:123.07px;font-size:26.5px;letter-spacing:0.667px;color:#525c69;">Clients</span>
<span class="t" style="left:1962.00px;top:123.07px;font-size:26.5px;letter-spacing:-0.208px;color:#525c69;">Call</span>
<span class="t" style="left:2260.00px;top:123.07px;font-size:26.5px;letter-spacing:0.662px;color:#2067b0;">Stacy Smith</span>
<div class="abs" style="left:30px;top:266.25px;width:24.5px;height:24.5px;border-radius:4.5px;border:2px solid #767676;background:#fff;box-sizing:border-box"></div>
<div class="abs" style="left:83px;top:273.25px;width:27px;height:4.6px;background:rgba(120,124,128,0.40)"></div>
<div class="abs" style="left:83px;top:280.75px;width:27px;height:4.6px;background:rgba(120,124,128,0.40)"></div>
<div class="abs" style="left:83px;top:288.25px;width:27px;height:4.6px;background:rgba(120,124,128,0.40)"></div>
<svg class="abs" style="left:140px;top:266.25px" width="98" height="98" viewBox="0 0 98 98"><circle cx="49" cy="49" r="49" fill="#c9cacf"/>
<path d="M49 19.4 Q59.6 19.4 60 30.6 Q60.4 33.4 59.6 35 Q61.4 36.6 60.4 39.6 Q59.6 42 58.4 42.2 Q57.6 47 54.6 50 L54.6 53.6 Q56 57.6 62.6 59.6 Q72.6 62.6 73.6 68.6 Q74 71 74 72.4 Q62 76.4 49 76.4 Q36 76.4 24 72.4 Q24 71 24.4 68.6 Q25.4 62.6 35.4 59.6 Q42 57.6 43.4 53.6 L43.4 50 Q40.4 47 39.6 42.2 Q38.4 42 37.6 39.6 Q36.6 36.6 38.4 35 Q37.6 33.4 38 30.6 Q38.4 19.4 49 19.4 Z" fill="#fff"/></svg>
<span class="t" style="left:258.00px;top:287.07px;font-size:26.5px;letter-spacing:0.827px;color:#2067b0;">Laura Mitchell</span>
<span class="t" style="left:258.00px;top:319.82px;font-size:26.5px;letter-spacing:0.667px;color:#525c69;">Clients</span>
<span class="t" style="left:619.00px;top:270.82px;font-size:26.5px;letter-spacing:0.575px;color:#2067b0;">Alex Miller</span>
<div class="abs" style="left:905px;top:272.25px;width:226.75px;height:31.5px;background:rgba(110,115,130,0.055);overflow:hidden"><div class="abs" style="left:18px;top:5px;width:190px;height:21px;border-radius:10px;background:rgba(110,115,135,0.045);filter:blur(8px)"></div></div>
<svg class="abs" style="left:1138.5px;top:272.25px" width="24" height="26" viewBox="0 0 24 26"><path d="M5.3 17.2 Q6.4 7.8 16.8 5" fill="none" stroke="#868c92" stroke-width="3.8" stroke-linecap="round"/><ellipse cx="7.3" cy="18.9" rx="3.5" ry="3.0" transform="rotate(-32 7.3 18.9)" fill="#868c92"/><ellipse cx="18.3" cy="7.4" rx="3.4" ry="2.9" transform="rotate(-32 18.3 7.4)" fill="#868c92"/></svg>
<span class="t" style="left:1319.00px;top:270.82px;font-size:26.5px;letter-spacing:0.819px;color:#525c69;">07/15/2025</span>
<span class="t" style="left:1634.00px;top:270.82px;font-size:26.5px;letter-spacing:0.667px;color:#525c69;">Clients</span>
<span class="t" style="left:1962.00px;top:270.82px;font-size:26.5px;letter-spacing:0.464px;color:#525c69;">CRM form</span>
<span class="t" style="left:2260.00px;top:270.82px;font-size:26.5px;letter-spacing:0.575px;color:#2067b0;">Alex Miller</span>
<svg class="abs" style="left:30px;top:414.0px" width="25" height="25" viewBox="0 0 25 25"><rect width="25" height="25" rx="4.5" fill="#0d6efd"/><path d="M5.2 12.6 L10.4 17.6 L19.6 6.6" fill="none" stroke="#fff" stroke-width="4.2" stroke-linejoin="miter"/></svg>
<div class="abs" style="left:83px;top:421.0px;width:27px;height:4.6px;background:rgba(110,122,110,0.36)"></div>
<div class="abs" style="left:83px;top:428.5px;width:27px;height:4.6px;background:rgba(110,122,110,0.36)"></div>
<div class="abs" style="left:83px;top:436.0px;width:27px;height:4.6px;background:rgba(110,122,110,0.36)"></div>
<svg class="abs" style="left:140px;top:414.0px" width="98" height="98" viewBox="0 0 98 98"><circle cx="49" cy="49" r="49" fill="#c9cacf"/>
<path d="M49 19.4 Q59.6 19.4 60 30.6 Q60.4 33.4 59.6 35 Q61.4 36.6 60.4 39.6 Q59.6 42 58.4 42.2 Q57.6 47 54.6 50 L54.6 53.6 Q56 57.6 62.6 59.6 Q72.6 62.6 73.6 68.6 Q74 71 74 72.4 Q62 76.4 49 76.4 Q36 76.4 24 72.4 Q24 71 24.4 68.6 Q25.4 62.6 35.4 59.6 Q42 57.6 43.4 53.6 L43.4 50 Q40.4 47 39.6 42.2 Q38.4 42 37.6 39.6 Q36.6 36.6 38.4 35 Q37.6 33.4 38 30.6 Q38.4 19.4 49 19.4 Z" fill="#fff"/></svg>
<span class="t" style="left:258.00px;top:434.82px;font-size:26.5px;letter-spacing:0.580px;color:#2067b0;">Stanley Gard</span>
<span class="t" style="left:258.00px;top:467.57px;font-size:26.5px;letter-spacing:0.667px;color:#525c69;">Clients</span>
<span class="t" style="left:619.00px;top:418.57px;font-size:26.5px;letter-spacing:0.812px;color:#2067b0;">Stacy Smith</span>
<div class="abs" style="left:902.5px;top:420.0px;width:239.0px;height:31.5px;background:rgba(120,140,110,0.065);overflow:hidden"><div class="abs" style="left:19px;top:5px;width:201px;height:21px;border-radius:10px;background:rgba(110,130,100,0.085);filter:blur(8px)"></div></div>
<svg class="abs" style="left:1144.5px;top:420.0px" width="24" height="26" viewBox="0 0 24 26"><path d="M5.3 17.2 Q6.4 7.8 16.8 5" fill="none" stroke="#868c92" stroke-width="3.8" stroke-linecap="round"/><ellipse cx="7.3" cy="18.9" rx="3.5" ry="3.0" transform="rotate(-32 7.3 18.9)" fill="#868c92"/><ellipse cx="18.3" cy="7.4" rx="3.4" ry="2.9" transform="rotate(-32 18.3 7.4)" fill="#868c92"/></svg>
<span class="t" style="left:1319.00px;top:418.57px;font-size:26.5px;letter-spacing:1.347px;color:#525c69;">07/08/2025</span>
<span class="t" style="left:1634.00px;top:418.57px;font-size:26.5px;letter-spacing:0.667px;color:#525c69;">Clients</span>
<span class="t" style="left:1962.00px;top:418.57px;font-size:26.5px;letter-spacing:-0.208px;color:#525c69;">Call</span>
<span class="t" style="left:2260.00px;top:418.57px;font-size:26.5px;letter-spacing:0.662px;color:#2067b0;">Stacy Smith</span>
<svg class="abs" style="left:30px;top:561.75px" width="25" height="25" viewBox="0 0 25 25"><rect width="25" height="25" rx="4.5" fill="#0d6efd"/><path d="M5.2 12.6 L10.4 17.6 L19.6 6.6" fill="none" stroke="#fff" stroke-width="4.2" stroke-linejoin="miter"/></svg>
<div class="abs" style="left:83px;top:568.75px;width:27px;height:4.6px;background:rgba(110,122,110,0.36)"></div>
<div class="abs" style="left:83px;top:576.25px;width:27px;height:4.6px;background:rgba(110,122,110,0.36)"></div>
<div class="abs" style="left:83px;top:583.75px;width:27px;height:4.6px;background:rgba(110,122,110,0.36)"></div>
<svg class="abs" style="left:140px;top:561.75px" width="98" height="98" viewBox="0 0 98 98"><circle cx="49" cy="49" r="49" fill="#c9cacf"/>
<path d="M49 19.4 Q59.6 19.4 60 30.6 Q60.4 33.4 59.6 35 Q61.4 36.6 60.4 39.6 Q59.6 42 58.4 42.2 Q57.6 47 54.6 50 L54.6 53.6 Q56 57.6 62.6 59.6 Q72.6 62.6 73.6 68.6 Q74 71 74 72.4 Q62 76.4 49 76.4 Q36 76.4 24 72.4 Q24 71 24.4 68.6 Q25.4 62.6 35.4 59.6 Q42 57.6 43.4 53.6 L43.4 50 Q40.4 47 39.6 42.2 Q38.4 42 37.6 39.6 Q36.6 36.6 38.4 35 Q37.6 33.4 38 30.6 Q38.4 19.4 49 19.4 Z" fill="#fff"/></svg>
<span class="t" style="left:258.00px;top:582.57px;font-size:26.5px;letter-spacing:0.762px;color:#2067b0;">Jaden Stone</span>
<span class="t" style="left:258.00px;top:615.32px;font-size:26.5px;letter-spacing:0.667px;color:#525c69;">Clients</span>
<span class="t" style="left:619.00px;top:566.32px;font-size:26.5px;letter-spacing:0.812px;color:#2067b0;">Stacy Smith</span>
<div class="abs" style="left:902.5px;top:567.75px;width:203.0px;height:31.5px;background:rgba(120,140,110,0.065);overflow:hidden"><div class="abs" style="left:16px;top:5px;width:171px;height:21px;border-radius:10px;background:rgba(110,130,100,0.085);filter:blur(8px)"></div></div>
<svg class="abs" style="left:1108.5px;top:567.75px" width="24" height="26" viewBox="0 0 24 26"><path d="M5.3 17.2 Q6.4 7.8 16.8 5" fill="none" stroke="#868c92" stroke-width="3.8" stroke-linecap="round"/><ellipse cx="7.3" cy="18.9" rx="3.5" ry="3.0" transform="rotate(-32 7.3 18.9)" fill="#868c92"/><ellipse cx="18.3" cy="7.4" rx="3.4" ry="2.9" transform="rotate(-32 18.3 7.4)" fill="#868c92"/></svg>
<span class="t" style="left:1319.00px;top:566.32px;font-size:26.5px;letter-spacing:1.347px;color:#525c69;">07/08/2025</span>
<span class="t" style="left:1634.00px;top:566.32px;font-size:26.5px;letter-spacing:0.667px;color:#525c69;">Clients</span>
<span class="t" style="left:1962.00px;top:566.32px;font-size:26.5px;letter-spacing:-0.208px;color:#525c69;">Call</span>
<span class="t" style="left:2260.00px;top:566.32px;font-size:26.5px;letter-spacing:0.662px;color:#2067b0;">Stacy Smith</span>
<svg class="abs" style="left:30px;top:709.5px" width="25" height="25" viewBox="0 0 25 25"><rect width="25" height="25" rx="4.5" fill="#0d6efd"/><path d="M5.2 12.6 L10.4 17.6 L19.6 6.6" fill="none" stroke="#fff" stroke-width="4.2" stroke-linejoin="miter"/></svg>
<div class="abs" style="left:83px;top:716.5px;width:27px;height:4.6px;background:rgba(110,122,110,0.36)"></div>
<div class="abs" style="left:83px;top:724.0px;width:27px;height:4.6px;background:rgba(110,122,110,0.36)"></div>
<div class="abs" style="left:83px;top:731.5px;width:27px;height:4.6px;background:rgba(110,122,110,0.36)"></div>
<svg class="abs" style="left:140px;top:709.5px" width="98" height="98" viewBox="0 0 98 98"><circle cx="49" cy="49" r="49" fill="#c9cacf"/>
<path d="M49 19.4 Q59.6 19.4 60 30.6 Q60.4 33.4 59.6 35 Q61.4 36.6 60.4 39.6 Q59.6 42 58.4 42.2 Q57.6 47 54.6 50 L54.6 53.6 Q56 57.6 62.6 59.6 Q72.6 62.6 73.6 68.6 Q74 71 74 72.4 Q62 76.4 49 76.4 Q36 76.4 24 72.4 Q24 71 24.4 68.6 Q25.4 62.6 35.4 59.6 Q42 57.6 43.4 53.6 L43.4 50 Q40.4 47 39.6 42.2 Q38.4 42 37.6 39.6 Q36.6 36.6 38.4 35 Q37.6 33.4 38 30.6 Q38.4 19.4 49 19.4 Z" fill="#fff"/></svg>
<span class="t" style="left:258.00px;top:730.32px;font-size:26.5px;letter-spacing:0.606px;color:#2067b0;">Caitlin Levine</span>
<span class="t" style="left:258.00px;top:763.07px;font-size:26.5px;letter-spacing:0.667px;color:#525c69;">Clients</span>
<span class="t" style="left:619.00px;top:714.07px;font-size:26.5px;letter-spacing:0.812px;color:#2067b0;">Stacy Smith</span>
<div class="abs" style="left:905px;top:715.5px;width:227px;height:31.5px;background:rgba(120,140,110,0.065);overflow:hidden"><div class="abs" style="left:18px;top:5px;width:191px;height:21px;border-radius:10px;background:rgba(110,130,100,0.085);filter:blur(8px)"></div></div>
<svg class="abs" style="left:1143.5px;top:715.5px" width="24" height="26" viewBox="0 0 24 26"><path d="M5.3 17.2 Q6.4 7.8 16.8 5" fill="none" stroke="#868c92" stroke-width="3.8" stroke-linecap="round"/><ellipse cx="7.3" cy="18.9" rx="3.5" ry="3.0" transform="rotate(-32 7.3 18.9)" fill="#868c92"/><ellipse cx="18.3" cy="7.4" rx="3.4" ry="2.9" transform="rotate(-32 18.3 7.4)" fill="#868c92"/></svg>
<span class="t" style="left:1319.00px;top:714.07px;font-size:26.5px;letter-spacing:1.347px;color:#525c69;">07/08/2025</span>
<span class="t" style="left:1634.00px;top:714.07px;font-size:26.5px;letter-spacing:0.667px;color:#525c69;">Clients</span>
<span class="t" style="left:1962.00px;top:714.07px;font-size:26.5px;letter-spacing:-0.208px;color:#525c69;">Call</span>
<span class="t" style="left:2260.00px;top:714.07px;font-size:26.5px;letter-spacing:0.662px;color:#2067b0;">Stacy Smith</span>
<div class="abs" style="left:2553px;top:0;width:18px;height:831.5px;background:linear-gradient(90deg,rgba(40,50,70,0) 0%,rgba(40,50,70,0.07) 100%)"></div>
<div class="abs" style="left:1132.25px;top:851.75px;width:306.25px;height:79.5px;border-radius:40px;border:1.3px solid #c4cad0;box-sizing:border-box"></div>
<span class="t" style="left:1220.50px;top:880.16px;font-size:25.5px;letter-spacing:0.188px;color:#2067b0;">Show more</span>
<div class="abs" style="left:0;top:955.5px;width:2571px;height:3px;background:#eef0f3"></div>
<div class="abs" style="left:0;top:1060.5px;width:2571px;height:3px;background:#eef0f3"></div>
<span class="t" style="left:38.40px;top:999.42px;font-size:21.6px;letter-spacing:-0.216px;color:#535c69;-webkit-text-stroke:0.75px #535c69;">SELECTED:</span>
<span class="t" style="left:165.00px;top:999.42px;font-size:21.6px;letter-spacing:0.669px;color:#0c0c0c;font-weight:bold;">4 / 5</span>
<span class="t" style="left:325.00px;top:999.42px;font-size:21.6px;letter-spacing:0.330px;color:#535c69;-webkit-text-stroke:0.75px #535c69;">TOTAL:</span>
<span class="t" style="left:408.60px;top:999.42px;font-size:21.6px;letter-spacing:0.373px;color:#2067b0;-webkit-text-stroke:0.75px #2067b0;">SHOW QUANTITY</span>
<span class="t" style="left:1097.25px;top:999.42px;font-size:21.6px;letter-spacing:-0.475px;color:#535c69;-webkit-text-stroke:0.75px #535c69;">PAGES:</span>
<span class="t" style="left:1188.00px;top:999.42px;font-size:21.6px;letter-spacing:0.000px;color:#535c69;-webkit-text-stroke:0.75px #535c69;">1</span>
<span class="t" style="left:1226.75px;top:999.42px;font-size:21.6px;letter-spacing:-0.292px;color:#2067b0;-webkit-text-stroke:0.75px #2067b0;">NEXT</span>
<span class="t" style="left:1314.25px;top:999.42px;font-size:21.6px;letter-spacing:-0.125px;color:#2067b0;-webkit-text-stroke:0.75px #2067b0;">LAST</span>
<div class="abs" style="left:1207.8px;top:996.5px;width:1.5px;height:25px;background:#d4d8dd"></div>
<div class="abs" style="left:1295.55px;top:996.5px;width:1.5px;height:25px;background:#d4d8dd"></div>
<span class="t" style="left:2302.00px;top:994.22px;font-size:21.6px;letter-spacing:-0.482px;color:#535c69;-webkit-text-stroke:0.75px #535c69;">RECORDS:</span>
<div class="abs" style="left:2420.25px;top:970.5px;width:124.75px;height:78px;border-radius:7px;border:1.4px solid #c4cad0;box-sizing:border-box"></div>
<span class="t" style="left:2452.00px;top:995.95px;font-size:22.5px;letter-spacing:0.000px;color:#525c69;">5</span>
<svg class="abs" style="left:2488px;top:997.5px" width="40" height="28" viewBox="2660 1362 40 28"><path d="M2671.6 1372.2 L2680.3 1380 L2689 1372.2" fill="none" stroke="#4a525e" stroke-width="4.2"/></svg>
<div class="abs" style="left:349.4px;top:1078.5px;width:264.35px;height:78.75px;border-radius:6.5px;border:1.5px solid #c5cbd1;box-sizing:border-box"></div>
<div class="abs" style="left:641.25px;top:1078.5px;width:412.5px;height:78.75px;border-radius:6.5px;border:1.5px solid #c5cbd1;box-sizing:border-box"></div>
<div class="abs" style="left:1082.25px;top:1078.5px;width:411.5px;height:78.75px;border-radius:6.5px;border:1.5px solid #c5cbd1;box-sizing:border-box"></div>
<span class="t" style="left:87.00px;top:1107.52px;font-size:23.6px;letter-spacing:-0.850px;color:#535c69;font-weight:bold;">DELETE</span>
<span class="t" style="left:266.50px;top:1107.52px;font-size:23.6px;letter-spacing:-0.392px;color:#535c69;font-weight:bold;">EDIT</span>
<span class="t" style="left:389.40px;top:1107.52px;font-size:23.6px;letter-spacing:0.198px;color:#535c69;font-weight:bold;">START DIALING</span>
<span class="t" style="left:682.25px;top:1107.52px;font-size:23.6px;letter-spacing:0.044px;color:#535c69;font-weight:bold;">SEND WHATSAPP MESSAGE</span>
<span class="t" style="left:1113.00px;top:1105.02px;font-size:23.6px;letter-spacing:0.125px;color:#535c69;-webkit-text-stroke:1.0px #535c69;">SCHEDULE BULK DIALING</span>
<span class="t" style="left:1750.50px;top:1107.52px;font-size:23.6px;letter-spacing:-1.292px;color:#535c69;font-weight:bold;">FOR ALL</span>
<svg class="abs" style="left:38px;top:1097.5px" width="230" height="42" viewBox="210 1462 230 42">
<path d="M221.4 1474.4 L238 1491 M238 1474.4 L221.4 1491" stroke="#535c69" stroke-width="6.4" fill="none"/>
<path d="M415.2 1471.4 L421.4 1477.6 L408 1491 L401.8 1484.8 Z" fill="#535c69"/><path d="M400.6 1486.6 L406.2 1492.2 L399.2 1493.8 Z" fill="#535c69"/></svg>
<svg class="abs" style="left:1438px;top:1105.5px" width="40" height="28" viewBox="1610 1470 40 28"><path d="M1620.6 1480.2 L1629.4 1488.2 L1638.2 1480.2" fill="none" stroke="#4a525e" stroke-width="4.2"/></svg>
<div class="abs" style="left:1515.5px;top:1071.75px;width:170.5px;height:92px;border-radius:27px;background:#f8574b"></div>
<div class="abs" style="left:1523.5px;top:1080.0px;width:154.5px;height:76px;border-radius:19px;background:#3cc7f4"></div>
<span class="t" style="left:1563.00px;top:1107.52px;font-size:23.6px;letter-spacing:-0.406px;color:#ffffff;font-weight:bold;">APPLY</span>
<div class="abs" style="left:1647.8999999999999px;top:1042.3px;width:68.4px;height:68.4px;border-radius:50%;background:#f8574b"></div>
<span class="t" style="left:1670.50px;top:1058.40px;font-size:39.4px;letter-spacing:0.000px;color:#ffffff;-webkit-text-stroke:0.7px #ffffff;">4</span>
<div class="abs" style="left:1715px;top:1106.0px;width:23px;height:22.5px;border-radius:5px;border:2px solid #6a717c;box-sizing:border-box;background:#fff"></div>
</div>
</body></html>
